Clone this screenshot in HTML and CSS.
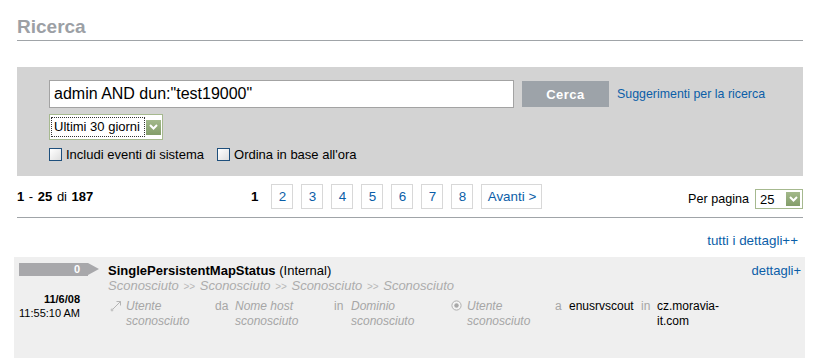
FILE: index.html
```html
<!DOCTYPE html>
<html>
  <head>
    <title>Ricerca</title>
    <meta name="viewport" content="width=device-width, initial-scale=1.0" />
    <link rel="stylesheet" href="styles.css">
  </head>
  <body>
    <div class="container">
      <h1 class="page-title">Ricerca</h1>

      <div class="search-panel">
        <div class="search-row">
          <input class="search-input" type="text" value='admin AND dun:"test19000"' />
          <button class="search-button">Cerca</button>
          <a class="search-tips" href="#">Suggerimenti per la ricerca</a>
        </div>
        <div class="fake-select period-select">
          <span class="select-value focused">Ultimi 30 giorni</span>
          <span class="select-arrow">
            <svg width="9" height="6" viewBox="0 0 9 6"><path d="M1 1 L4.5 4.5 L8 1" fill="none" stroke="#fff" stroke-width="2"/></svg>
          </span>
        </div>
        <div class="options-row">
          <label class="check"><span class="check-box"></span>Includi eventi di sistema</label>
          <label class="check"><span class="check-box"></span>Ordina in base all'ora</label>
        </div>
      </div>

      <div class="pager">
        <div class="pager-count"><b>1</b> - <b>25</b> di <b>187</b></div>
        <div class="pager-pages">
          <span class="page current">1</span>
          <a class="page" href="#">2</a>
          <a class="page" href="#">3</a>
          <a class="page" href="#">4</a>
          <a class="page" href="#">5</a>
          <a class="page" href="#">6</a>
          <a class="page" href="#">7</a>
          <a class="page" href="#">8</a>
          <a class="page next" href="#">Avanti &gt;</a>
        </div>
        <div class="per-page">
          Per pagina
          <div class="fake-select size-select">
            <span class="select-value">25</span>
            <span class="select-arrow">
              <svg width="9" height="6" viewBox="0 0 9 6"><path d="M1 1 L4.5 4.5 L8 1" fill="none" stroke="#fff" stroke-width="2"/></svg>
            </span>
          </div>
        </div>
      </div>

      <div class="all-details">
        <a href="#">tutti i dettagli++</a>
      </div>

      <div class="result">
        <div class="result-side">
          <div class="count-bar">0</div>
          <div class="result-date"><b>11/6/08</b><br />11:55:10 AM</div>
        </div>
        <div class="result-main">
          <div class="result-title"><b>SinglePersistentMapStatus</b> (Internal)</div>
          <div class="result-path">
            Sconosciuto <span class="sep">&gt;&gt;</span> Sconosciuto <span class="sep">&gt;&gt;</span> Sconosciuto <span class="sep">&gt;&gt;</span> Sconosciuto
          </div>
          <div class="fields">
            <span class="f-icon">
              <svg width="12" height="12" viewBox="0 0 12 12">
                <path d="M2 10 L10.5 1.5 M6.5 1.5 L10.5 1.5 L10.5 5.5" fill="none" stroke="#b4b4b4" stroke-width="1"/>
                <circle cx="2" cy="10" r="1.4" fill="#c4c4c4"/>
              </svg>
            </span>
            <span class="f-value w89">Utente sconosciuto</span>
            <span class="f-word w20">da</span>
            <span class="f-value w99">Nome host sconosciuto</span>
            <span class="f-word w17">in</span>
            <span class="f-value w100">Dominio sconosciuto</span>
            <span class="f-icon radio-icon">
              <svg width="11" height="11" viewBox="0 0 11 11">
                <circle cx="5.5" cy="5.5" r="4.6" fill="#f4f4f4" stroke="#b0b0b0" stroke-width="1"/>
                <circle cx="5.5" cy="5.5" r="2.2" fill="#a8a8a8"/>
              </svg>
            </span>
            <span class="f-value w88">Utente sconosciuto</span>
            <span class="f-word w14">a</span>
            <span class="f-value known w72">enusrvscout</span>
            <span class="f-word w16">in</span>
            <span class="f-value known w72">cz.moravia-it.com</span>
          </div>
        </div>
        <a class="result-link" href="#">dettagli+</a>
      </div>
    </div>
  </body>
</html>
```

FILE: styles.css
```css
body {
  margin: 0;
  background: white;
  color: black;
  font-family: "Liberation Sans", Arial, sans-serif;
  font-size: 13px;
}
a {
  color: #0b5ea8;
  text-decoration: none;
}
.container {
  width: 786px;
  padding-left: 17px;
}
.page-title {
  margin: 16px 0 0 0;
  font-size: 19px;
  line-height: 22px;
  color: #9ca0a5;
  padding-bottom: 2px;
  border-bottom: 1px solid #a0a4a8;
}

/* search box */
.search-panel {
  margin-top: 26px;
  background: #d3d3d3;
  padding: 13px 0 15px 32px;
}
.search-row {
  display: flex;
  align-items: center;
}
.search-input {
  box-sizing: border-box;
  width: 465px;
  height: 28px;
  margin: 0;
  border: 1px solid #a3a3a3;
  padding: 0 0 0 4px;
  font-family: "Liberation Sans", Arial, sans-serif;
  font-size: 16px;
  color: black;
}
.search-button {
  width: 87px;
  height: 26px;
  margin-left: 8px;
  border: 0;
  background: #9da3a9;
  color: white;
  font-family: "Liberation Sans", Arial, sans-serif;
  font-weight: bold;
  font-size: 13px;
  letter-spacing: 0.5px;
}
.search-tips {
  margin-left: 8px;
  font-size: 12.4px;
}
.fake-select {
  box-sizing: border-box;
  display: flex;
  align-items: center;
  background: white;
  border: 1px solid #a6b98f;
}
.period-select {
  width: 114px;
  height: 26px;
  margin-top: 6px;
  padding: 0 1px;
}
.select-value {
  flex: 1;
  font-size: 13px;
}
.period-select .select-value {
  height: 20px;
  line-height: 20px;
  padding-left: 3px;
}
.select-value.focused {
  outline: 1px dotted #333;
  outline-offset: -1px;
}
.select-arrow {
  width: 15px;
  height: 15px;
  margin-left: 1px;
  background: linear-gradient(#a3b98b, #839d69);
  display: flex;
  align-items: center;
  justify-content: center;
}
.options-row {
  display: flex;
  margin-top: 8px;
  height: 13px;
  align-items: center;
}
.check {
  display: flex;
  align-items: center;
  margin-right: 13px;
  font-size: 13px;
}
.check-box {
  box-sizing: border-box;
  width: 13px;
  height: 13px;
  border: 1px solid #1e4f7c;
  background: linear-gradient(135deg, #fff, #dedede);
  margin-right: 4px;
}

/* pager */
.pager {
  display: flex;
  align-items: center;
  height: 41px;
  border-bottom: 1px solid #a0a4a8;
}
.pager-count {
  width: 233px;
  word-spacing: 1px;
}
.pager-pages {
  display: flex;
  align-items: center;
}
.page {
  box-sizing: border-box;
  height: 25px;
  min-width: 22px;
  margin-right: 8px;
  border: 1px solid #d8d8d8;
  display: flex;
  align-items: center;
  justify-content: center;
  font-size: 13.4px;
}
.page.current {
  border-color: transparent;
  font-weight: bold;
  min-width: 0;
  margin-right: 12px;
}
.page.next {
  width: 61px;
}
.per-page {
  margin-left: auto;
  display: flex;
  align-items: center;
  font-size: 12.6px;
  padding-top: 5px;
}
.size-select {
  width: 48px;
  height: 20px;
  margin-left: 6px;
  padding: 0 2px 0 4px;
}
.size-select .select-arrow {
  width: 14px;
  height: 14px;
}

.all-details {
  text-align: right;
  padding: 15px 5px 0 0;
  line-height: 16px;
  font-size: 13.4px;
}

/* result */
.result {
  display: flex;
  margin: 8px -2px 0 -3px;
  height: 101px;
  box-sizing: border-box;
  background: #efefef;
  padding: 6px 4px 0 5px;
}
.result-side {
  width: 89px;
  flex-shrink: 0;
}
.count-bar {
  position: relative;
  width: 69px;
  height: 13px;
  background: #a8a8ab;
  color: white;
  font-weight: bold;
  font-size: 11px;
  line-height: 13px;
  text-align: right;
  box-sizing: border-box;
  padding-right: 8px;
}
.count-bar::after {
  content: "";
  position: absolute;
  left: 69px;
  top: 0;
  border-left: 11px solid #a8a8ab;
  border-top: 6.5px solid transparent;
  border-bottom: 6.5px solid transparent;
}
.result-date {
  margin-top: 16px;
  padding-right: 28px;
  text-align: right;
  font-size: 11px;
  line-height: 14px;
}
.result-main {
  flex: 1;
}
.result-title {
  font-size: 13px;
  line-height: 16px;
}
.result-path {
  font-size: 13px;
  line-height: 14px;
  color: #acacac;
  font-style: italic;
  word-spacing: 1px;
}
.sep {
  font-style: normal;
  font-size: 10px;
  color: #b8b8b8;
}
.fields {
  display: flex;
  margin-top: 5px;
  font-size: 12px;
  line-height: 15px;
  color: #a6a6a6;
}
.f-icon {
  width: 18px;
  flex-shrink: 0;
  padding: 1px 0 0 2px;
  box-sizing: border-box;
}
.radio-icon {
  width: 16px;
  padding: 1px 0 0 0;
}
.f-value {
  font-style: italic;
  flex-shrink: 0;
}
.f-value.known {
  font-style: normal;
  color: black;
}
.f-word {
  flex-shrink: 0;
}
.w89 { width: 89px; }
.w99 { width: 99px; }
.w100 { width: 100px; }
.w88 { width: 88px; }
.w72 { width: 72px; }
.w20 { width: 20px; }
.w17 { width: 17px; }
.w16 { width: 16px; }
.w14 { width: 14px; }
.result-link {
  font-size: 13px;
  line-height: 16px;
  align-self: flex-start;
}
```
